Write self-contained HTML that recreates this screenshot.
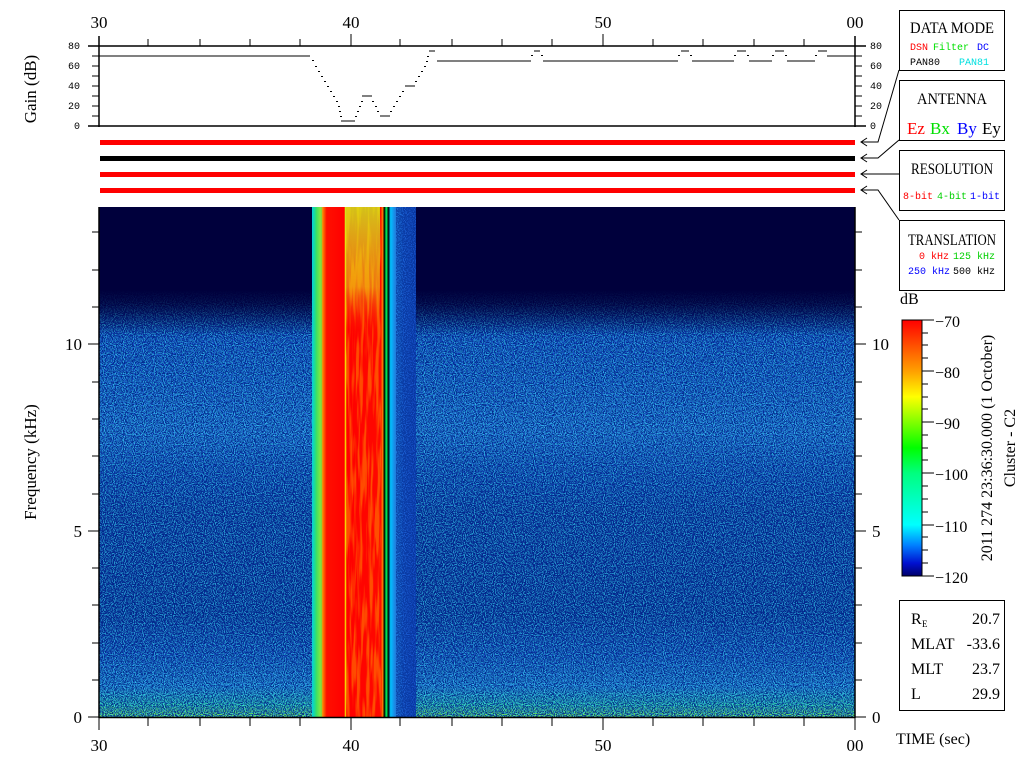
<!DOCTYPE html>
<html><head><meta charset="utf-8"><style>
html,body{margin:0;padding:0;background:#fff;width:1024px;height:768px;overflow:hidden}
svg{display:block}
.m{font-family:"Liberation Mono",monospace;font-size:10px}
.s{font-family:"Liberation Serif",serif}
</style></head><body>
<svg width="1024" height="768" viewBox="0 0 1024 768" xmlns="http://www.w3.org/2000/svg">
<defs>
<linearGradient id="bg" x1="0" y1="207" x2="0" y2="717" gradientUnits="userSpaceOnUse">
<stop offset="0" stop-color="#00003c"/>
<stop offset="0.18" stop-color="#00003c"/>
<stop offset="0.22" stop-color="#0a2290"/>
<stop offset="0.26" stop-color="#1848c8"/>
<stop offset="0.33" stop-color="#1c58d0"/>
<stop offset="0.44" stop-color="#2a74e0"/>
<stop offset="0.52" stop-color="#1440b8"/>
<stop offset="0.60" stop-color="#0c2898"/>
<stop offset="0.80" stop-color="#0a2490"/>
<stop offset="0.88" stop-color="#1848c0"/>
<stop offset="0.94" stop-color="#2a88e0"/>
<stop offset="0.975" stop-color="#30c8a0"/>
<stop offset="1" stop-color="#70e040"/>
</linearGradient>
<linearGradient id="fade" x1="0" y1="290" x2="0" y2="335" gradientUnits="userSpaceOnUse">
<stop offset="0" stop-color="#00003c" stop-opacity="1"/>
<stop offset="0.3" stop-color="#00003c" stop-opacity="0.8"/>
<stop offset="1" stop-color="#00003c" stop-opacity="0"/>
</linearGradient>
<linearGradient id="burst" x1="312" y1="0" x2="416" y2="0" gradientUnits="userSpaceOnUse">
<stop offset="0" stop-color="#00d0e0"/>
<stop offset="0.04" stop-color="#30e070"/>
<stop offset="0.08" stop-color="#c0f020"/>
<stop offset="0.11" stop-color="#ff7000"/>
<stop offset="0.14" stop-color="#ff1000"/>
<stop offset="0.31" stop-color="#ff0000"/>
<stop offset="0.32" stop-color="#f0f000"/>
<stop offset="0.335" stop-color="#ff0000"/>
<stop offset="0.66" stop-color="#ff0800"/>
<stop offset="0.68" stop-color="#ff8000"/>
<stop offset="0.695" stop-color="#000000"/>
<stop offset="0.715" stop-color="#00ff60"/>
<stop offset="0.735" stop-color="#000000"/>
<stop offset="0.755" stop-color="#00c0ff"/>
<stop offset="0.80" stop-color="#2080e0"/>
<stop offset="0.88" stop-color="#1a5cd0"/>
<stop offset="1" stop-color="#1650c8"/>
</linearGradient>
<linearGradient id="btop" x1="0" y1="207" x2="0" y2="340" gradientUnits="userSpaceOnUse">
<stop offset="0" stop-color="#c8f020" stop-opacity="0.8"/>
<stop offset="0.6" stop-color="#e0e020" stop-opacity="0.5"/>
<stop offset="1" stop-color="#ff0000" stop-opacity="0"/>
</linearGradient>
<linearGradient id="cb" x1="0" y1="320" x2="0" y2="576" gradientUnits="userSpaceOnUse">
<stop offset="0" stop-color="#ff0000"/>
<stop offset="0.2" stop-color="#ffa000"/>
<stop offset="0.3" stop-color="#ffff00"/>
<stop offset="0.5" stop-color="#00ff00"/>
<stop offset="0.6" stop-color="#00ff80"/>
<stop offset="0.8" stop-color="#00ffff"/>
<stop offset="0.88" stop-color="#0080ff"/>
<stop offset="0.95" stop-color="#0010d0"/>
<stop offset="1" stop-color="#00006a"/>
</linearGradient>
<filter id="nz" x="0" y="0" width="100%" height="100%">
<feTurbulence type="fractalNoise" baseFrequency="0.9" numOctaves="1" seed="3"/>
<feColorMatrix type="matrix" values="0 0 0 0 0  0 0 0 0 0.02  0 0 0 0 0.25  0 0 0 -9 5.5"/>
</filter>
<filter id="nz2" x="0" y="0" width="100%" height="100%">
<feTurbulence type="fractalNoise" baseFrequency="0.9" numOctaves="1" seed="9"/>
<feColorMatrix type="matrix" values="0 0 0 0 0.05  0 0 0 0 0.85  0 0 0 0 1  0 0 0 -9 4.6"/>
</filter>
<filter id="nz3" x="0" y="0" width="100%" height="100%">
<feTurbulence type="fractalNoise" baseFrequency="0.3 0.02" numOctaves="2" seed="5"/>
<feColorMatrix type="matrix" values="0 0 0 0 1  0 0 0 0 0.9  0 0 0 0 0  0 0 0 -5 2.8"/>
</filter>
</defs>

<rect x="99" y="207" width="756" height="510" fill="url(#bg)"/>
<rect x="99" y="290" width="756" height="427" filter="url(#nz)" opacity="0.9"/>
<rect x="99" y="290" width="756" height="427" filter="url(#nz2)" opacity="0.55"/>
<rect x="99" y="207" width="756" height="83" fill="#00003c"/>
<rect x="99" y="290" width="756" height="45" fill="url(#fade)"/>
<rect x="312" y="207" width="104" height="510" fill="url(#burst)"/>
<rect x="345" y="207" width="35" height="140" fill="url(#btop)"/>
<rect x="316" y="207" width="6" height="510" fill="#40e060" opacity="0.5"/>
<rect x="345" y="207" width="36" height="510" filter="url(#nz3)" opacity="0.3"/>
<rect x="396" y="207" width="20" height="510" filter="url(#nz)" opacity="0.6"/>

<g stroke="#000" stroke-width="1.5" fill="none">
<line x1="99" y1="207" x2="99" y2="718"/>
<line x1="855" y1="207" x2="855" y2="718"/>
<line x1="99" y1="717.5" x2="855" y2="717.5"/>
<line x1="99" y1="36" x2="99" y2="127"/>
<line x1="855" y1="36" x2="855" y2="127"/>
<line x1="88" y1="46" x2="866" y2="46"/>
<line x1="88" y1="126" x2="866" y2="126"/>
</g>
<g stroke="#000" stroke-width="1">
<path d="M148 39V46M200 39V46M250 39V46M300 39V46M351 34V46M400 39V46M452 39V46M502 39V46M552 39V46M603 34V46M653 39V46M703 39V46M754 39V46M804 39V46"/>
<path d="M148 717V726M200 717V726M250 717V726M300 717V726M351 717V730M400 717V726M452 717V726M502 717V726M552 717V726M603 717V730M653 717V726M703 717V726M754 717V726M804 717V726M99 717V730M855 717V730"/>
<path d="M92 56H99M92 66H99M92 76H99M92 86H99M92 96H99M92 106H99M92 116H99M855 56H862M855 66H862M855 76H862M855 86H862M855 96H862M855 106H862M855 116H862"/>
<path d="M88 717H99M92 680H99M92 643H99M92 605H99M92 568H99M88 531H99M92 494H99M92 456H99M92 419H99M92 382H99M88 344H99M92 307H99M92 270H99M92 232H99"/>
<path d="M855 717H866M855 680H862M855 643H862M855 605H862M855 568H862M855 531H866M855 494H862M855 456H862M855 419H862M855 382H862M855 344H866M855 307H862M855 270H862M855 232H862"/>
<path d="M922 320H934M922 333H928M922 345H928M922 358H928M922 371H934M922 384H928M922 397H928M922 409H928M922 422H934M922 435H928M922 448H928M922 460H928M922 473H934M922 486H928M922 499H928M922 512H928M922 525H934M922 537H928M922 550H928M922 563H928M922 576H934"/>
</g>

<g fill="#000">
<rect x="99" y="55.5" width="211" height="1"/>
<rect x="312" y="60" width="2" height="1"/><rect x="315" y="66" width="2" height="1"/><rect x="318" y="71" width="2" height="1"/><rect x="321" y="76" width="2" height="1"/><rect x="324" y="81" width="2" height="1"/><rect x="327" y="86" width="2" height="1"/><rect x="330" y="91" width="2" height="1"/><rect x="333" y="96" width="2" height="1"/><rect x="336" y="101" width="2" height="1"/><rect x="338" y="106" width="2" height="1"/><rect x="339" y="111" width="2" height="1"/><rect x="340" y="116" width="2" height="1"/>
<rect x="341" y="120.5" width="14" height="1"/>
<rect x="355" y="116" width="2" height="1"/><rect x="357" y="111" width="2" height="1"/><rect x="359" y="106" width="2" height="1"/><rect x="361" y="101" width="2" height="1"/>
<rect x="362" y="95.5" width="10" height="1"/>
<rect x="372" y="101" width="2" height="1"/><rect x="375" y="106" width="2" height="1"/><rect x="377" y="111" width="2" height="1"/>
<rect x="380" y="115.5" width="10" height="1"/>
<rect x="390" y="111" width="2" height="1"/><rect x="393" y="106" width="2" height="1"/><rect x="396" y="101" width="2" height="1"/><rect x="399" y="96" width="2" height="1"/><rect x="402" y="91" width="2" height="1"/>
<rect x="405" y="85.5" width="10" height="1"/>
<rect x="415" y="81" width="2" height="1"/><rect x="418" y="76" width="2" height="1"/><rect x="421" y="71" width="2" height="1"/><rect x="424" y="66" width="2" height="1"/><rect x="426" y="61" width="2" height="1"/><rect x="427" y="56" width="2" height="1"/>
<rect x="429" y="50.5" width="6" height="1"/>
<rect x="437" y="60.5" width="94" height="1"/>
<rect x="531" y="55" width="2" height="1"/><rect x="534" y="50.5" width="6" height="1"/><rect x="541" y="55" width="2" height="1"/>
<rect x="543" y="60.5" width="135" height="1"/>
<rect x="678" y="55" width="2" height="1"/><rect x="681" y="50.5" width="8" height="1"/><rect x="690" y="55" width="2" height="1"/>
<rect x="692" y="60.5" width="42" height="1"/>
<rect x="734" y="55" width="2" height="1"/><rect x="737" y="50.5" width="9" height="1"/><rect x="747" y="55" width="2" height="1"/>
<rect x="749" y="60.5" width="23" height="1"/>
<rect x="772" y="55" width="2" height="1"/><rect x="775" y="50.5" width="9" height="1"/><rect x="785" y="55" width="2" height="1"/>
<rect x="787" y="60.5" width="28" height="1"/>
<rect x="815" y="55" width="2" height="1"/><rect x="818" y="50.5" width="9" height="1"/>
<rect x="827" y="55.5" width="28" height="1"/>
</g>

<rect x="100" y="140" width="755" height="5" fill="#ff0000"/>
<rect x="100" y="156" width="755" height="5" fill="#000"/>
<rect x="100" y="172" width="755" height="5" fill="#ff0000"/>
<rect x="100" y="188" width="755" height="5" fill="#ff0000"/>

<g stroke="#000" stroke-width="1" fill="none">
<path d="M899 70L878 142H861M867 138L861 142L867 146"/>
<path d="M899 140L878 158H861M867 154L861 158L867 162"/>
<path d="M899 174H861M867 170L861 174L867 178"/>
<path d="M899 220L878 190H861M867 186L861 190L867 194"/>
</g>

<g stroke="#000" stroke-width="1" fill="#fff">
<rect x="899.5" y="10.5" width="105" height="60"/>
<rect x="899.5" y="80.5" width="105" height="60"/>
<rect x="899.5" y="150.5" width="105" height="60"/>
<rect x="899.5" y="220.5" width="105" height="70"/>
<rect x="899.5" y="600.5" width="105" height="110"/>
</g>
<rect x="902" y="320" width="20" height="256" fill="url(#cb)" stroke="#000" stroke-width="1"/>

<g class="s" font-size="17" fill="#000" text-anchor="middle">
<text x="99" y="28">30</text><text x="351" y="28">40</text><text x="603" y="28">50</text><text x="855" y="28">00</text>
<text x="99" y="751">30</text><text x="351" y="751">40</text><text x="603" y="751">50</text><text x="855" y="751">00</text>
</g>
<g class="s" font-size="17" fill="#000">
<text x="82" y="723" text-anchor="end">0</text><text x="82" y="537" text-anchor="end">5</text><text x="82" y="350" text-anchor="end">10</text>
<text x="872" y="723">0</text><text x="872" y="537">5</text><text x="872" y="350">10</text>
<text x="896" y="744" font-size="16">TIME (sec)</text>
<text x="900" y="304" font-size="16">dB</text>
<text x="935" y="327" font-size="16">−70</text><text x="935" y="378" font-size="16">−80</text><text x="935" y="429" font-size="16">−90</text>
<text x="935" y="480" font-size="16">−100</text><text x="935" y="532" font-size="16">−110</text><text x="935" y="583" font-size="16">−120</text>
<text transform="translate(36,462) rotate(-90)" text-anchor="middle" font-size="17">Frequency (kHz)</text>
<text transform="translate(36,89) rotate(-90)" text-anchor="middle" font-size="17">Gain (dB)</text>
<text transform="translate(992,448) rotate(-90)" text-anchor="middle" font-size="16">2011 274 23:36:30.000 (1 October)</text>
<text transform="translate(1015,448) rotate(-90)" text-anchor="middle" font-size="16">Cluster - C2</text>
</g>
<g class="m" fill="#000">
<text x="80" y="49" text-anchor="end">80</text><text x="80" y="69" text-anchor="end">60</text><text x="80" y="89" text-anchor="end">40</text><text x="80" y="109" text-anchor="end">20</text><text x="80" y="129" text-anchor="end">0</text>
<text x="870" y="49">80</text><text x="870" y="69">60</text><text x="870" y="89">40</text><text x="870" y="109">20</text><text x="870" y="129">0</text>
</g>
<g class="s" font-size="16" text-anchor="middle">
<text x="952" y="33" textLength="84" lengthAdjust="spacingAndGlyphs">DATA MODE</text>
<text x="952" y="104" textLength="70" lengthAdjust="spacingAndGlyphs">ANTENNA</text>
<text x="952" y="174" textLength="82" lengthAdjust="spacingAndGlyphs">RESOLUTION</text>
<text x="952" y="245" textLength="88" lengthAdjust="spacingAndGlyphs">TRANSLATION</text>
</g>
<g class="m">
<text x="910" y="50" fill="#ff0000">DSN</text><text x="933" y="50" fill="#00e000">Filter</text><text x="977" y="50" fill="#0000ff">DC</text>
<text x="910" y="65" fill="#000">PAN80</text><text x="959" y="65" fill="#00e0e0">PAN81</text>
<text x="903" y="199" fill="#ff0000">8-bit</text><text x="937" y="199" fill="#00d000">4-bit</text><text x="970" y="199" fill="#0000ff">1-bit</text>
<text x="919" y="259" fill="#ff0000">0 kHz</text><text x="953" y="259" fill="#00d000">125 kHz</text>
<text x="908" y="274" fill="#0000ff">250 kHz</text><text x="953" y="274" fill="#000">500 kHz</text>
</g>
<g class="s" font-size="17">
<text x="907" y="134" fill="#ff0000">Ez</text><text x="930" y="134" fill="#00e000">Bx</text><text x="957" y="134" fill="#0000ff">By</text><text x="982" y="134" fill="#000">Ey</text>
</g>
<g class="s" font-size="16" fill="#000">
<text x="911" y="624">R</text><text x="922" y="627" font-size="9">E</text><text x="1000" y="624" text-anchor="end">20.7</text>
<text x="911" y="649">MLAT</text><text x="1000" y="649" text-anchor="end">-33.6</text>
<text x="911" y="674">MLT</text><text x="1000" y="674" text-anchor="end">23.7</text>
<text x="911" y="699">L</text><text x="1000" y="699" text-anchor="end">29.9</text>
</g>
</svg>
</body></html>
